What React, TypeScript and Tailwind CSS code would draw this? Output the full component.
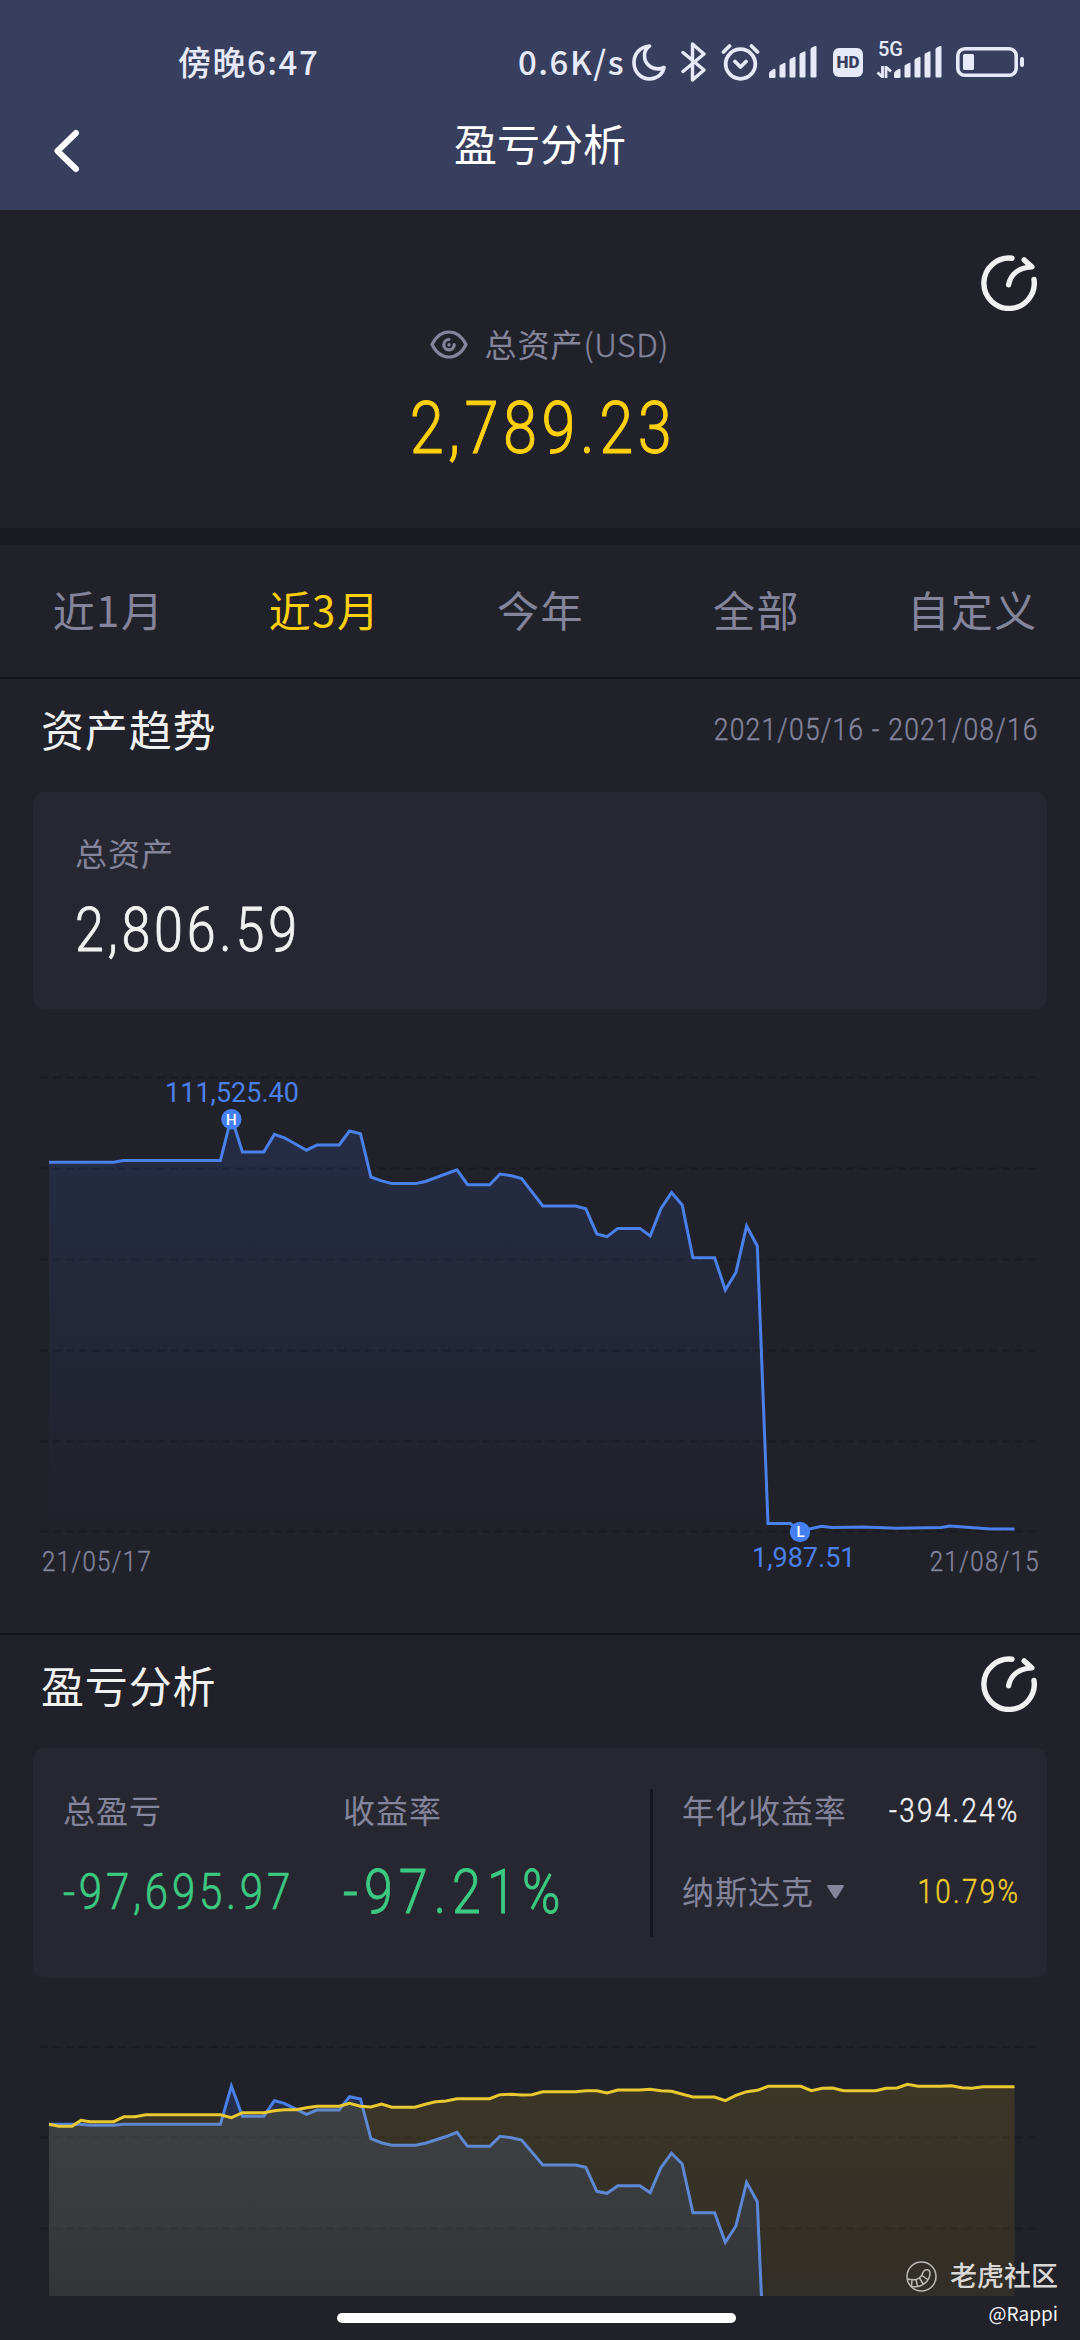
import type { ReactNode } from "react";

type Point = [number, number];

const TABS = ["近1月", "近3月", "今年", "全部", "自定义"];

// x, y in chart pixels
const ASSETS: Point[] = [
  [49, 102.3], [113.6, 102.3], [123.3, 100.5], [220.4, 100.5], [231.4, 57], [242.4, 92], [263.8, 92],
  [274.4, 74.4], [284.4, 77.8], [306.5, 90.2], [317.1, 85], [339.2, 85], [349.5, 71], [360.5, 73.7],
  [370.9, 117], [380.9, 120.6], [391.9, 123.6], [415.6, 123.6], [425.3, 121.5], [457, 109.8], [467.6, 124.7],
  [489.7, 124.7], [500, 114], [511.4, 115.7], [521.7, 118.5], [542.8, 146], [575.5, 146], [585.8, 148.8],
  [596.8, 173.9], [607.1, 176.6], [617.8, 168.4], [639.9, 168.4], [650.2, 176], [660.9, 148.8], [671.5, 132.6],
  [682.2, 145], [692.9, 197.7], [714.6, 197.7], [725.3, 230], [735.9, 212.5], [746.6, 166], [757.3, 186],
  [768, 463.5], [790.3, 463.5], [800, 471], [821.7, 466.3], [832, 467.6], [863, 467], [897, 468.3],
  [941, 467.6], [949.8, 466], [967, 467.3], [991, 469], [1014.5, 469],
];

const RETURNS: Point[] = [
  [49, 94.3], [80, 94.3], [90, 95.3], [113.6, 95.3], [123.3, 94.3], [220.4, 94.3], [231.4, 56], [242.4, 86.3],
  [263.8, 86.3], [274.4, 70.7], [284.4, 73.3], [306.5, 84.3], [317.1, 80], [339.2, 80], [349.5, 66.7],
  [360.5, 69], [370.9, 108.7], [382, 113], [391.9, 115.3], [415.6, 115.3], [425.3, 113.3], [447.7, 106],
  [457, 102.3], [467.6, 116.3], [489.7, 116.3], [500, 106.3], [511.4, 107.7], [521.7, 110], [542.8, 135],
  [575.5, 135], [585.8, 137.3], [596.8, 161.3], [607.1, 163.3], [617.8, 155.7], [639.9, 155.7], [650.2, 162.7],
  [660.9, 137.7], [671.5, 123.3], [682.2, 134], [692.9, 182.7], [714.6, 182.7], [725.3, 212.3], [735.9, 196],
  [746.6, 152.3], [757.3, 171.7], [768, 417],
];

const NASDAQ: Point[] = [
  [49, 94.3], [59, 96.3], [72, 96.3], [81, 90.3], [90, 91.7], [113.6, 91.7], [124, 86.7], [135, 86.7],
  [145.7, 84.7], [220.4, 84.7], [231.4, 87.7], [242.4, 82.7], [263.8, 82.7], [274.4, 80.7], [284.4, 79.7],
  [296, 79.7], [306.5, 77.7], [317.1, 76.3], [339.2, 76.3], [349.5, 73.3], [360.5, 76.3], [370.9, 77],
  [381.5, 74], [391.9, 77.3], [415, 77.3], [425.3, 74.3], [435.6, 71.7], [446, 71], [457, 68.7], [489.7, 68.7],
  [500, 64.7], [511.4, 64.3], [521.7, 65], [532, 64.7], [542.8, 61.7], [575.5, 61.7], [585.8, 60.7],
  [596.8, 60.7], [607.1, 63], [617.8, 60], [639.9, 60], [650.2, 59.3], [660.9, 60.7], [671.5, 61.3],
  [692.9, 67], [714.6, 67], [725.3, 70.7], [735.9, 65.3], [746.6, 61.7], [757.3, 60.3], [768, 56.3],
  [800.7, 56.3], [811.4, 60.7], [822.4, 58.3], [832.7, 58], [843.7, 60.7], [875.7, 60.7], [886, 58.3],
  [897, 58], [907.4, 54.3], [918, 56.3], [941, 56.3], [951.5, 55.7], [961.8, 57.7], [972, 58.3], [983, 56.7],
  [1014.5, 56.7],
];

const line = (pts: Point[]) => pts.map(([x, y]) => `${x},${y}`).join(" ");
const area = (pts: Point[], bottom: number) =>
  `${pts[0][0]},${bottom} ${line(pts)} ${pts[pts.length - 1][0]},${bottom}`;

// DIN-like narrow numerals; the hairline stroke puts the weight between light and regular
function Num({ children, className = "" }: { children: ReactNode; className?: string }) {
  return (
    <span className={`inline-block scale-x-[0.84] whitespace-nowrap font-[Roboto,sans-serif] font-light [-webkit-text-stroke:0.014em] ${className}`}>
      {children}
    </span>
  );
}

function ShareIcon() {
  return (
    <svg className="size-14 shrink-0" viewBox="0 0 56 56" fill="none" stroke="#f1f1f2" strokeWidth="5.4" strokeLinecap="round" strokeLinejoin="round">
      <path d="M31 3.2A25.2 25.2 0 1 0 53 24.5" />
      <path d="M27.6 29.8C29.5 19.5 37.5 12.6 51 11.9L43.2 4.9" />
    </svg>
  );
}

function SignalBars() {
  return (
    <svg className="h-8 w-12" viewBox="0 0 48 32" fill="#e6e9f8">
      <path d="M0 31v-3.500q0-1.500 1.500-2.500l3-2q2-1 2 1v7q0 1-1 1h-4.500q-1 0-1-1z" />
      <path d="M11 19l4-2q1.500-.6 1.500 1v12.500q0 1-1 1h-4q-1 0-1-1v-10z" />
      <path d="M21 13l4-2q1.500-.6 1.500 1v18.500q0 1-1 1h-4q-1 0-1-1v-16z" />
      <path d="M31 7.500l4-2q1.500-.6 1.500 1v24q0 1-1 1h-4q-1 0-1-1v-21.500z" />
      <path d="M42 2l4-2q1.500-.6 1.500 1v29.500q0 1-1 1h-4q-1 0-1-1v-27z" />
    </svg>
  );
}

function StatusBar() {
  return (
    <div className="relative flex h-[104px] pt-5 text-[33px] font-medium text-[#e6e9f8]">
      <div className="flex h-[84px] w-[518px] items-center pl-[178px]">
        <span className="whitespace-nowrap tracking-[0.045em]">傍晚6:47</span>
      </div>
      <div className="flex h-[84px] items-center">
        <span className="w-[114px] whitespace-nowrap tracking-[0.045em]">0.6K/s</span>
        <svg className="mr-[15px] h-[37px] w-[34px]" viewBox="0 0 34 37" fill="none" stroke="#e6e9f8" strokeWidth="3.600" strokeLinejoin="round">
          <path d="M17.500 2C7.500 3 2 10 2 18.500C2 28 9 35 17.500 35C25 35 31 30 32 23.500C23 27.500 12 22 12.500 11C12.700 7 14.500 4 17.500 2z" />
        </svg>
        <svg className="mr-[15px] h-10 w-[25px]" viewBox="0 0 25 40" fill="none" stroke="#e6e9f8" strokeWidth="3.400" strokeLinecap="round" strokeLinejoin="round">
          <path d="M2 10.500L23 28L11.500 38V2L23 12L2 29.500" />
        </svg>
        <svg className="mr-[9px] h-[38px] w-[39px]" viewBox="0 0 39 38" fill="none" stroke="#e6e9f8" strokeWidth="3.800" strokeLinecap="round" strokeLinejoin="round">
          <circle cx="19.500" cy="21" r="14.800" />
          <path d="M14 18.500l5.500 5.500l5.500-5.500M2.500 9l6-6M36.500 9l-6-6" />
        </svg>
        <SignalBars />
        <div className="ml-4 mr-[13px] flex h-[29px] w-[30px] items-center justify-center rounded-md bg-[#e6e9f8] font-[Roboto,sans-serif] text-[17px] font-black leading-none text-[#383e5d]">
          HD
        </div>
        <div className="relative w-[66px] pl-[18px]">
          <span className="absolute -top-[7px] left-[2px] font-[Roboto,sans-serif] text-[20px] font-medium leading-none">5G</span>
          <SignalBars />
          <svg className="absolute bottom-0 left-0 h-3 w-4" viewBox="0 0 16 12" fill="none" stroke="#e6e9f8" strokeWidth="2.800">
            <path d="M1.500 6.500L6.500 11V0M10 12V1L15 5.500" />
          </svg>
        </div>
        <svg className="ml-[14px] h-[30px] w-[69px]" viewBox="0 0 69 30" fill="#e6e9f8">
          <rect x="1.800" y="1.800" width="58.400" height="26.400" rx="7" fill="none" stroke="#e6e9f8" strokeWidth="3.600" />
          <rect x="7" y="7" width="11" height="16" rx="1.500" />
          <rect x="64" y="10" width="4" height="10" rx="2" />
        </svg>
      </div>
    </div>
  );
}

function GridLines({ ys }: { ys: number[] }) {
  return (
    <g stroke="#15151d" strokeOpacity="0.6" strokeWidth="2" strokeDasharray="8 5">
      {ys.map((y) => (
        <line key={y} x1="40" x2="1038" y1={y} y2={y} />
      ))}
    </g>
  );
}

function AssetChart() {
  return (
    <svg className="mt-[51px] block h-[484px] w-full" viewBox="0 0 1080 484">
      <defs>
        <linearGradient id="asset-fill" x1="0" y1="0" x2="0" y2="1">
          <stop offset="0" stopColor="#3d7bff" stopOpacity="0.13" />
          <stop offset="1" stopColor="#3d7bff" stopOpacity="0" />
        </linearGradient>
      </defs>
      <GridLines ys={[17.5, 108.5, 199.5, 290.5, 381.5, 471.5]} />
      <polygon points={area(ASSETS, 471.8)} fill="url(#asset-fill)" />
      <polyline points={line(ASSETS)} fill="none" stroke="#4a80ea" strokeWidth="3" />
      <g className="font-[Roboto,sans-serif]" textAnchor="middle">
        <circle cx="231.400" cy="59.200" r="10.200" fill="#4480f2" />
        <text x="231.400" y="64.600" fontSize="15" fontWeight="500" fill="#fff">H</text>
        <text x="232" y="42" fontSize="27" fill="#4a80ea">111,525.40</text>
        <circle cx="800" cy="472" r="10.200" fill="#4480f2" />
        <text x="800.500" y="477.400" fontSize="15" fontWeight="500" fill="#fff">L</text>
      </g>
    </svg>
  );
}

function ReturnChart() {
  return (
    <svg className="mt-[52px] block h-[266px] w-full" viewBox="0 0 1080 266">
      <defs>
        <linearGradient id="blue-fill" gradientUnits="userSpaceOnUse" x1="0" y1="56" x2="0" y2="470">
          <stop offset="0" stopColor="#3d7bff" stopOpacity="0.16" />
          <stop offset="1" stopColor="#3d7bff" stopOpacity="0" />
        </linearGradient>
        <linearGradient id="yellow-fill" gradientUnits="userSpaceOnUse" x1="0" y1="56" x2="0" y2="470">
          <stop offset="0" stopColor="#ffce0a" stopOpacity="0.12" />
          <stop offset="1" stopColor="#ffce0a" stopOpacity="0.03" />
        </linearGradient>
      </defs>
      <GridLines ys={[17, 107.5, 198.5]} />
      <polygon points={area(RETURNS, 470)} fill="url(#blue-fill)" />
      <polyline points={line(RETURNS)} fill="none" stroke="#4a80ea" strokeWidth="3" />
      <polygon points={area(NASDAQ, 470)} fill="url(#yellow-fill)" />
      <polyline points={line(NASDAQ)} fill="none" stroke="#e9c92f" strokeWidth="3" />
    </svg>
  );
}

function Watermark() {
  return (
    <div className="absolute bottom-0 right-[22px] flex h-[84px] flex-col items-end whitespace-nowrap">
      <div className="flex h-10 items-center gap-[13px] text-[27px] font-medium leading-10 text-[#d9d7d5]">
        <svg className="size-[31px]" viewBox="0 0 31 31" fill="none" stroke="#bdbbb8" strokeWidth="1.500">
          <circle cx="15.500" cy="15.500" r="14.500" />
          <path d="M1.500 18C9 20 15 18 17 11.500C18 8 23.500 7.500 24 11.500C24 20 16 27.500 5 25.500M6 19l-.5 6M10 18.500l1.500 7M13.500 17l4 6.500M16 14.500l5.500 4" />
        </svg>
        <span className="-mt-0.5">老虎社区</span>
      </div>
      <div className="mt-[5px] text-[19px] leading-6 text-[#f3f3f4]">@Rappi</div>
    </div>
  );
}

export default function App() {
  return (
    <div className="relative h-[2340px] w-[1080px] overflow-hidden bg-[#21212a] font-['Noto_Sans_CJK_SC',sans-serif] text-[#f1f1f2]">
      {/* header */}
      <header className="h-[210px] bg-[#383e5d]">
        <StatusBar />
        <div className="grid h-[82px] grid-cols-[216px_1fr_216px] items-center">
          <svg className="ml-[53px] mt-3 h-[44px] w-[27px]" viewBox="0 0 27 44" fill="none" stroke="#fff" strokeWidth="6" strokeLinecap="round" strokeLinejoin="round">
            <path d="M23 4L4.500 22L23 40" />
          </svg>
          <h1 className="-mt-[5px] text-center text-[43px] leading-none text-white">盈亏分析</h1>
        </div>
      </header>

      {/* total assets */}
      <section className="flex h-[318px] flex-col items-center">
        <div className="flex h-[101px] w-full items-end justify-end pr-[43px]">
          <ShareIcon />
        </div>
        <div className="mt-2 flex h-[50px] items-center gap-[17px] pl-[14px] text-[32px] text-[#84849b]">
          <svg className="h-[29px] w-[38px]" viewBox="0 0 38 29" fill="none" stroke="#84849b" strokeWidth="3.200" strokeLinecap="round">
            <path d="M2 14.500C6 6.500 12 2 19 2s13 4.500 17 12.500C32 22.500 26 27 19 27S6 22.500 2 14.500z" />
            <path d="M19 9.500a5.200 5.200 0 1 0 5.200 5.200M19 14.500v.4" />
          </svg>
          <span className="-mt-0.5 flex leading-none">
            <span className="tracking-[0.03em]">总资产</span>
            <span className="w-[81px] font-light tracking-[0.02em] [-webkit-text-stroke:0.4px]">(USD)</span>
          </span>
        </div>
        <Num className="mt-[23px] pl-[7px] text-[73px] leading-[72px] tracking-[0.073em] text-[#ffd00d]">2,789.23</Num>
      </section>

      <div className="h-[17px] bg-[#1a1a22]" />

      {/* range tabs */}
      <nav className="grid h-[134px] grid-cols-5 border-b-2 border-[#15151d] text-[42px] tracking-[0.035em]">
        {TABS.map((tab, i) => (
          <button key={tab} className={`pb-[5px] pl-px ${i === 1 ? "text-[#ffd00d]" : "text-[#84849b]"}`}>
            {tab}
          </button>
        ))}
      </nav>

      {/* asset trend */}
      <section className="h-[956px] border-b-2 border-[#15151d]">
        <div className="flex h-[113px] items-center justify-between pl-[41px] pr-[41px]">
          <h2 className="-mt-3.5 text-[43px] tracking-[0.02em]">资产趋势</h2>
          <Num className="-mt-3 origin-right text-[31.5px] tracking-[0.045em] text-[#84849b]">2021/05/16 - 2021/08/16</Num>
        </div>
        <div className="mx-[33px] h-[217px] rounded-xl bg-[#272731] pl-[42px] pt-[42px]">
          <div className="text-[32px] leading-9 tracking-[0.03em] text-[#84849b]">总资产</div>
          <Num className="mt-6 origin-left text-[62px] leading-[72px] tracking-[0.072em]">2,806.59</Num>
        </div>
        <AssetChart />
        <div className="grid grid-cols-3 px-[42px] leading-8">
          <Num className="mt-0.5 origin-left text-[28.5px] tracking-[0.06em] text-[#84849b]">21/05/17</Num>
          <span className="col-start-2 -mr-[262px] ml-[378px] whitespace-nowrap font-[Roboto,sans-serif] text-[27px] leading-7 text-[#4a80ea]">
            1,987.51
          </span>
          <Num className="col-start-3 -mr-0.5 mt-0.5 origin-right text-right text-[28.5px] tracking-[0.06em] text-[#84849b]">21/08/15</Num>
        </div>
      </section>

      {/* profit and loss */}
      <section>
        <div className="flex h-[113px] items-start justify-between pl-[41px] pr-[43px] pt-[21px]">
          <h2 className="-mt-1 text-[43px] tracking-[0.02em]">盈亏分析</h2>
          <ShareIcon />
        </div>
        <div className="mx-[33px] flex h-[230px] rounded-xl bg-[#272731] pt-[41px]">
          <div className="w-[279px] pl-[30px]">
            <div className="mt-0.5 text-[32px] leading-9 tracking-[0.03em] text-[#84849b]">总盈亏</div>
            <Num className="mt-[29px] origin-left text-[50px] leading-[72px] tracking-[0.09em] text-[#3cc982]">-97,695.97</Num>
          </div>
          <div className="w-[338px] pl-[31px]">
            <div className="mt-0.5 text-[32px] leading-9 tracking-[0.03em] text-[#84849b]">收益率</div>
            <Num className="mt-[29px] origin-left text-[62px] leading-[72px] tracking-[0.115em] text-[#3cc982]">-97.21%</Num>
          </div>
          <div className="h-[148px] w-[3px] bg-[#15151d]" />
          <div className="flex-1 pl-[29px] pr-[27px] text-[32px] tracking-[0.03em] text-[#84849b]">
            <div className="mt-0.5 flex h-9 items-center justify-between whitespace-nowrap">
              年化收益率
              <Num className="mt-[3px] origin-right text-[33px] tracking-[0.085em] text-[#f1f1f2]">-394.24%</Num>
            </div>
            <div className="mt-[45px] flex h-9 items-center whitespace-nowrap">
              纳斯达克
              <svg className="ml-[13px] mt-1 h-[14px] w-[17px]" viewBox="0 0 17 14" fill="#84849b">
                <path d="M1 0h15q1.500.5.500 2l-6.500 10.500q-1.500 2-3 0L.5 2Q-.5.500 1 0z" />
              </svg>
              <Num className="ml-auto mt-[3px] origin-right text-[33px] tracking-[0.085em] text-[#f0cd2a]">10.79%</Num>
            </div>
          </div>
        </div>
        <ReturnChart />
      </section>

      <Watermark />
      <div className="absolute bottom-[17px] left-[337px] h-2.5 w-[399px] rounded-full bg-white" />
    </div>
  );
}
